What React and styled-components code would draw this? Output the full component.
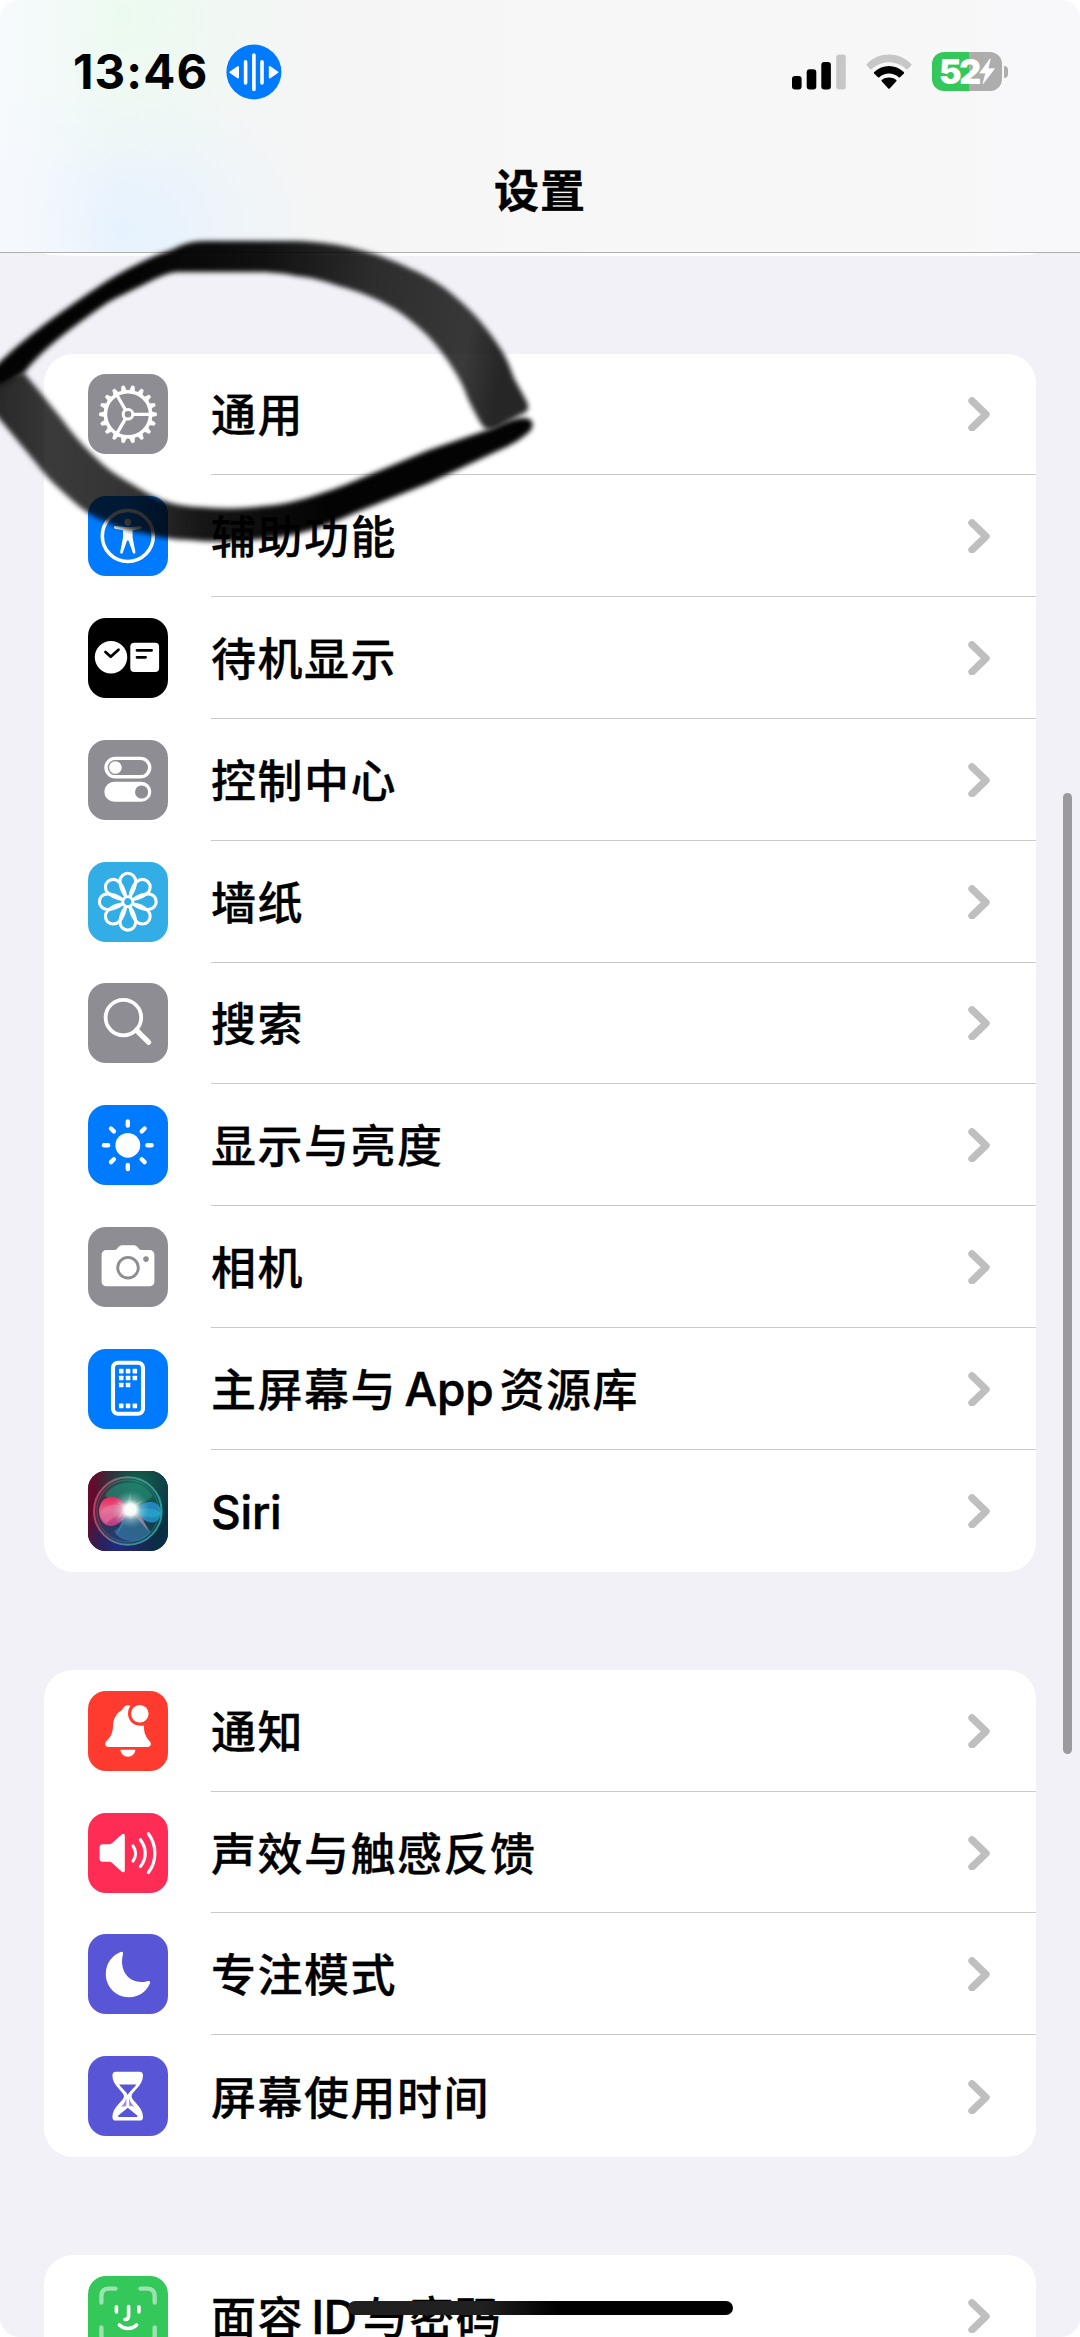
import React from "react";
import styled, { createGlobalStyle } from "styled-components";

const groups = [
  [
    { label: "通用", color: "#8e8d93", icon: "gear" },
    { label: "辅助功能", color: "#007aff", icon: "accessibility" },
    { label: "待机显示", color: "#000", icon: "standby" },
    { label: "控制中心", color: "#8e8d93", icon: "control" },
    { label: "墙纸", color: "#32ade6", icon: "wallpaper" },
    { label: "搜索", color: "#8e8d93", icon: "search" },
    { label: "显示与亮度", color: "#007aff", icon: "sun" },
    { label: "相机", color: "#8e8d93", icon: "camera" },
    { label: "主屏幕与 App资源库", color: "#007aff", icon: "home" },
    { label: "Siri", color: "#14202e", icon: "siri" },
  ],
  [
    { label: "通知", color: "#ff3b30", icon: "bell" },
    { label: "声效与触感反馈", color: "#ff2d55", icon: "speaker" },
    { label: "专注模式", color: "#5856d6", icon: "moon" },
    { label: "屏幕使用时间", color: "#5856d6", icon: "hourglass" },
  ],
  [{ label: "面容 ID与密码", color: "#34c759", icon: "face" }],
];

const around = (count) =>
  Array.from({ length: count }, (_, i) => (i * 360) / count);

const glyphs = {
  gear: (
    <g transform="translate(40 40.3)" fill="none" stroke="#fff">
      <circle r="22.6" strokeWidth="3.6" />
      {around(18).map((a) => (
        <path
          key={a}
          d="M23.5 -2.5L28.6 -1.2V1.2L23.5 2.5Z"
          fill="#fff"
          strokeWidth="0.7"
          transform={`rotate(${a})`}
        />
      ))}
      {around(3).map((a) => (
        <path key={a} d="M5 0H22" strokeWidth="3.3" transform={`rotate(${a})`} />
      ))}
      <circle r="4.8" strokeWidth="3" />
    </g>
  ),
  accessibility: (
    <g fill="#fff">
      <circle cx="39.8" cy="40" r="25.5" fill="none" stroke="#fff" strokeWidth="3.6" />
      <circle cx="39.8" cy="26.2" r="3.4" />
      <path d="M27.3 30.1L37 31.1H42.6L52.3 30.1C54 30 54.2 32.4 52.6 32.7L44.6 34.2V41.5L47.4 56C47.6 58 45.3 58.3 44.8 56.7L40.5 44.5H39.1L34.8 56.7C34.3 58.3 32 58 32.2 56L35 41.5V34.2L27 32.7C25.4 32.4 25.6 30 27.3 30.1Z" />
    </g>
  ),
  standby: (
    <g>
      <circle cx="23" cy="39.3" r="16.2" fill="#fff" />
      <rect x="42.3" y="24.7" width="28.8" height="29.4" rx="4" fill="#fff" />
      <path
        d="M17.5 34L22.7 38.8L30.5 31.8M49 32.3H63.6M49 39.3H57.6"
        fill="none"
        stroke="#000"
        strokeWidth="2.8"
        strokeLinecap="round"
        strokeLinejoin="round"
      />
    </g>
  ),
  control: (
    <g fill="#fff">
      <rect x="18" y="18.4" width="43.7" height="18.4" rx="9.2" fill="none" stroke="#fff" strokeWidth="3.4" />
      <circle cx="27.4" cy="27.5" r="6.3" />
      <rect x="16.3" y="41.7" width="47" height="20" rx="10" />
      <circle cx="53.6" cy="52" r="6.6" fill="#8e8d93" />
    </g>
  ),
  wallpaper: (
    <g transform="translate(39.8 39.7)" fill="none" stroke="#fff" strokeWidth="3.1">
      {around(8).map((a) => (
        <path
          key={a}
          d="M-2 -5C-6.4 -11 -7.8 -16 -7.8 -20.6A7.8 7.8 0 0 1 7.8 -20.6C7.8 -16 6.4 -11 2 -5"
          transform={`rotate(${a})`}
        />
      ))}
      {around(8).map((a) => (
        <path key={a} d="M0 -5V-8.5" strokeWidth="2" transform={`rotate(${a + 22.5})`} />
      ))}
      <circle r="5" strokeWidth="2.8" />
    </g>
  ),
  search: (
    <g fill="none" stroke="#fff">
      <circle cx="35.4" cy="34.6" r="17.8" strokeWidth="3.8" />
      <path d="M48.4 47.2L60.7 59.3" strokeWidth="5.2" strokeLinecap="round" />
    </g>
  ),
  sun: (
    <g transform="translate(39.8 40.3)" fill="#fff">
      <circle r="12.4" />
      {around(8).map((a) => (
        <path
          key={a}
          d="M0 -19.7V-23.8"
          stroke="#fff"
          strokeWidth="4.4"
          strokeLinecap="round"
          transform={`rotate(${a})`}
        />
      ))}
    </g>
  ),
  camera: (
    <g fill="#fff">
      <path d="M18.5 23H26.5C30 23 30 18.3 34 18.3H46C50 18.3 50 23 53.5 23H61.5C64.5 23 66.4 25 66.4 28V54.5C66.4 57.5 64.5 59.3 61.5 59.3H18.5C15.5 59.3 13.6 57.5 13.6 54.5V28C13.6 25 15.5 23 18.5 23Z" />
      <circle cx="40" cy="40.7" r="10.3" fill="none" stroke="#8e8d93" strokeWidth="2.9" />
      <circle cx="58" cy="32.1" r="2.8" fill="#8e8d93" />
    </g>
  ),
  home: (
    <g fill="#fff">
      <rect x="25" y="13.8" width="30" height="51" rx="5" fill="none" stroke="#fff" strokeWidth="4.1" />
      {[
        [0, 0], [1, 0], [2, 0],
        [0, 1], [1, 1], [2, 1],
        [0, 2], [1, 2],
        [0, 5], [1, 5], [2, 5],
      ].map(([x, y]) => (
        <rect key={`${x}${y}`} x={31 + x * 6.8} y={19.8 + y * 6.95} width="4.5" height="4.6" rx="0.6" />
      ))}
    </g>
  ),
  siri: (
    <g>
      <defs>
        <linearGradient id="siriBack" x1="0" y1="0.3" x2="1" y2="0.5">
          <stop offset="0" stopColor="#6b0a2c" />
          <stop offset="0.5" stopColor="#1d1c35" />
          <stop offset="1" stopColor="#073044" />
        </linearGradient>
        <radialGradient id="siriTop" cx="0.62" cy="0.15" r="0.55">
          <stop offset="0" stopColor="#12654f" />
          <stop offset="1" stopColor="#12654f" stopOpacity="0" />
        </radialGradient>
        <radialGradient id="siriLow" cx="0.38" cy="0.95" r="0.5">
          <stop offset="0" stopColor="#222a80" />
          <stop offset="1" stopColor="#222a80" stopOpacity="0" />
        </radialGradient>
        <linearGradient id="siriRing" x1="0" y1="0.4" x2="1" y2="0.6">
          <stop offset="0" stopColor="#d8486e" />
          <stop offset="0.45" stopColor="#5a9f96" />
          <stop offset="1" stopColor="#24b5b0" />
        </linearGradient>
        <radialGradient id="siriGlow">
          <stop offset="0" stopColor="#fff" />
          <stop offset="0.3" stopColor="#fff" stopOpacity="0.95" />
          <stop offset="0.55" stopColor="#d5ece8" stopOpacity="0.4" />
          <stop offset="1" stopColor="#8bd" stopOpacity="0" />
        </radialGradient>
        <linearGradient id="siriPink" x1="0" y1="0" x2="0" y2="1">
          <stop offset="0" stopColor="#ef2358" />
          <stop offset="0.45" stopColor="#dc628d" />
          <stop offset="1" stopColor="#b63a83" />
        </linearGradient>
      </defs>
      <rect width="80" height="80" fill="url(#siriBack)" />
      <rect width="80" height="80" fill="url(#siriTop)" />
      <rect width="80" height="80" fill="url(#siriLow)" />
      <circle cx="39.8" cy="40" r="33" fill="#2c8a7a" fillOpacity="0.22" />
      <path d="M17 25C25 9 53 5 65 25C58 31 48 37 42 38C34 34 25 29 17 25Z" fill="#279278" fillOpacity="0.55" />
      <path d="M26 60C34 55 38 48 42 41C52 45 60 56 63 61C53 74 33 73 26 60Z" fill="#3b8fbb" fillOpacity="0.5" />
      <path d="M11 40C12 25 25 22 34 30C38 33 41 37 45 40C37 44 34 54 23 55C15 55 11 48 11 40Z" fill="url(#siriPink)" />
      <path d="M12 42C19 31 32 31 45 40C34 42 25 45 18 53C14 50 12 46 12 42Z" fill="#ff8eae" fillOpacity="0.35" />
      <path d="M44 40C50 36 55 30 64 31C72 32 75 40 72 46C68 54 60 52 55 48C51 44 49 42 44 40Z" fill="#2391d0" fillOpacity="0.85" />
      <path d="M44 40C55 36 68 36 73 43C67 48 57 48 44 40Z" fill="#31c4cc" fillOpacity="0.4" />
      <path d="M45 42L61 61L54 46Z" fill="#e39bb5" fillOpacity="0.5" />
      <path d="M42 41L28 66L36 43Z" fill="#56a8e0" fillOpacity="0.35" />
      <circle cx="42.5" cy="38.5" r="19" fill="url(#siriGlow)" />
      <path d="M42 22L44 34L55 29L47 39L54 46L43 43L29 47L36 38L29 31L39 34Z" fill="#fff" fillOpacity="0.2" />
      <circle cx="39.8" cy="40" r="33.8" fill="none" stroke="url(#siriRing)" strokeWidth="2" strokeOpacity="0.8" />
      <circle cx="39.8" cy="40" r="31" fill="none" stroke="url(#siriRing)" strokeWidth="1" strokeOpacity="0.4" />
    </g>
  ),
  bell: (
    <g fill="#fff">
      <path d="M42.5 14.8C39.5 13.4 35.5 14.6 34 19C27.5 22.5 25.3 28.5 25 35C24.6 44.5 21.5 46.5 18.3 50.3C16 53 17.3 55.9 20.2 55.9H59.8C62.7 55.9 64 53 61.7 50.3C58.5 46.5 56 43.5 55.8 34.5C48 36.3 40 31 40 22.5C40 19.5 41 16.8 42.5 14.8Z" />
      <circle cx="51.8" cy="22.7" r="8.8" />
      <path d="M32.4 58.8H47.4C47 62.8 44 65.8 39.9 65.8C35.8 65.8 32.8 62.8 32.4 58.8Z" />
    </g>
  ),
  speaker: (
    <g>
      <path d="M14.5 31.3H21.5C22.5 31.3 23.2 31 24 30.3L33.6 21.5C35.3 20 36.8 20.8 36.8 22.8V57.2C36.8 59.2 35.3 60 33.6 58.5L24 49.7C23.2 49 22.5 48.7 21.5 48.7H14.5C12.6 48.7 11.6 47.7 11.6 45.8V34.2C11.6 32.3 12.6 31.3 14.5 31.3Z" fill="#fff" />
      <path
        d="M45 33C48.3 37.5 48.3 43.5 45 48M52.4 26.7C58.8 35 58.8 45.5 52.4 53.6M60.4 20.7C69 32 69 48.5 60.4 59.5"
        fill="none"
        stroke="#fff"
        strokeWidth="3.2"
        strokeLinecap="round"
      />
    </g>
  ),
  moon: (
    <path
      d="M32.7 17.9C34.5 17.2 35.5 18.4 35 20.3C31.3 34 38.5 48.4 54 48C56.5 48 58.6 47.5 60 47C61.7 46.6 62.6 47.6 62 49.2C58.5 57.8 50.5 63.2 41 63.2C28 63.2 17.8 53 17.8 40C17.8 29.5 24 21.2 32.7 17.9Z"
      fill="#fff"
    />
  ),
  hourglass: (
    <g>
      <path
        d="M28 15.7H51.6C54 15.7 55 17.2 55 19.5C55 30 43.5 35.5 43.5 40.3C43.5 45 55 50.5 55 61C55 63.5 54 64.6 51.6 64.6H28C25.5 64.6 24.4 63.5 24.4 61C24.4 50.5 36 45 36 40.3C36 35.5 24.4 30 24.4 19.5C24.4 17.2 25.5 15.7 28 15.7Z"
        fill="#fff"
      />
      <path d="M31.2 28.6H48.3C46 32.5 41 35.5 39.8 39.2C38.6 35.5 33.5 32.5 31.2 28.6Z" fill="#5856d6" />
      <path d="M38.4 41.5C38.2 44.5 36 47.5 33.2 50.8C35.5 50 37.8 51 38.4 49.2ZM41.1 41.5C41.3 44.5 43.5 47.5 46.4 50.8C44 50 41.7 51 41.1 49.2Z" fill="#5856d6" fillOpacity="0.65" />
      <path d="M39.8 51.8L49.3 59.6Q50 60.9 48.8 61H30.8Q29.6 60.9 30.3 59.6Z" fill="#5856d6" />
    </g>
  ),
  face: (
    <g fill="none" stroke="#fff" strokeWidth="3.6" strokeLinecap="round">
      <path
        d="M13.4 26.5V20C13.4 15 16 12.6 21 12.6H27.5M66.7 26.5V20C66.7 15 64 12.6 59 12.6H52.5M13.4 51.5V59C13.4 64 16 66.5 21 66.5H27.5M66.7 51.5V59C66.7 64 64 66.5 59 66.5H52.5"
        strokeWidth="4.4"
        strokeOpacity="0.5"
      />
      <path d="M28.4 30.7V36M50.9 30.7V36M40.6 30.5V40C40.6 42.5 39.5 43.5 37 43.5M31.4 49C36 53.6 44 53.6 48.6 49" />
    </g>
  ),
};

const SignalIcon = () => (
  <svg width="54" height="36" viewBox="0 0 54 36">
    <rect x="0" y="22" width="9.6" height="13.5" rx="3" />
    <rect x="14.7" y="15.2" width="9.6" height="20.3" rx="3" />
    <rect x="29.3" y="8" width="9.6" height="27.5" rx="3" />
    <rect x="44.2" y="0.4" width="9.6" height="35.1" rx="3" fill="#c7c7c7" />
  </svg>
);

const WifiIcon = () => (
  <svg width="46" height="36" viewBox="0 0 46 36">
    <path d="M0.6 11.3Q0 10.6 0.8 9.9C13 -2.6 33 -2.6 45.2 9.9Q46 10.6 45.4 11.3L41.6 15.2Q41 15.8 40.2 15.1C30.5 5.8 15.5 5.8 5.8 15.1Q5 15.8 4.4 15.2Z" fill="#c7c7c7" />
    <path d="M8.1 19.4Q7.5 18.7 8.2 18C16.5 9.9 29.5 9.9 37.8 18Q38.5 18.7 37.9 19.4L34 23.3Q33.3 23.9 32.6 23.3C27.2 18.3 18.8 18.3 13.4 23.3Q12.7 23.9 12 23.3Z" />
    <path d="M15.7 27.3Q15 26.6 15.8 26C20 22.8 26 22.8 30.2 26Q31 26.6 30.3 27.3L23.7 34.5Q23 35.2 22.3 34.5Z" />
  </svg>
);

const VoiceIcon = () => (
  <svg width="56" height="56" viewBox="0 0 56 56">
    <ellipse cx="27.9" cy="28" rx="27.5" ry="27.4" fill="#007aff" />
    <path d="M19.6 17.7V38.9M27.9 11V45.4M36 17.7V38.9" stroke="#fff" strokeWidth="3.6" strokeLinecap="round" />
    <path d="M4.5 28.2L12 23V33.5ZM51.3 28.2L43.8 23V33.5Z" fill="#fff" stroke="#fff" strokeWidth="2" strokeLinejoin="round" />
  </svg>
);

const Bolt = () => (
  <svg width="16" height="27" viewBox="0 0 16 27">
    <path d="M11.2 0.8L0.8 15H6.8L4 25.6L15.4 10.8H9Z" fill="#fff" stroke="#fff" strokeWidth="0.8" strokeLinejoin="round" />
  </svg>
);

const ChevronIcon = () => (
  <svg width="22" height="35" viewBox="0 0 22 35">
    <path d="M4 4.8L18 18.3L4 31.8" fill="none" stroke="#bfbfbf" strokeWidth="7.4" strokeLinecap="round" strokeLinejoin="round" />
  </svg>
);

// marker loop drawn around the first row
const MarkerLoop = () => (
  <Ink width="560" height="340" viewBox="0 220 560 340">
    <defs>
      <linearGradient id="inkTop" gradientUnits="userSpaceOnUse" x1="120" y1="300" x2="500" y2="370">
        <stop offset="0" stopOpacity="0.99" />
        <stop offset="0.35" stopOpacity="0.93" />
        <stop offset="0.65" stopOpacity="0.81" />
        <stop offset="0.9" stopOpacity="0.77" />
        <stop offset="1" stopOpacity="0.85" />
      </linearGradient>
      <linearGradient id="inkLow" gradientUnits="userSpaceOnUse" x1="0" y1="0" x2="330" y2="0">
        <stop offset="0" stopOpacity="0.83" />
        <stop offset="0.15" stopOpacity="0.77" />
        <stop offset="0.4" stopOpacity="0.8" />
        <stop offset="0.6" stopOpacity="0.91" />
        <stop offset="1" stopOpacity="0.99" />
      </linearGradient>
      <filter id="soft" x="-5%" y="-5%" width="110%" height="110%">
        <feGaussianBlur stdDeviation="2.4" />
      </filter>
    </defs>
    <path
      filter="url(#soft)"
      fill="url(#inkTop)"
      d="M-12 374C20 340 60 312 107 281C130 267 150 257 171 250C183 244 192 241 206 241H298C335 242 375 251 411 269C430 277 445 287 459 300C475 314 488 329 500 348C508 360 510 368 514 378L527 402C530 410 527 412 520 415L498 427C490 431 485 430 482 425C476 415 473 409 468 399C465 390 462 384 458 377C450 363 441 350 429 337C418 326 406 316 393 308C376 298 358 291 339 286C325 281 310 277 296 276C285 273 276 273 264 272H178C165 273 155 279 143 285C131 291 119 296 107 303C88 316 70 329 52 344C43 352 33 361 24 373L-12 395Z"
    />
    <path
      filter="url(#soft)"
      fill="url(#inkLow)"
      d="M-12 392C0 386 8 376 24 373C36 387 48 402 61 418C72 433 83 446 96 458C107 469 119 477 132 484C145 492 157 499 171 503C185 507 200 507 214 508C232 509 248 508 264 506C279 505 293 502 307 498C325 492 341 487 357 480L429 450L493 428C505 422 515 418 524 418C535 418 534 428 529 432C521 439 513 444 504 448L429 483L357 512C340 520 322 527 304 532C287 537 268 539 250 540C229 542 209 542 189 540C173 540 158 537 143 533C130 531 116 527 104 521C88 515 76 504 64 493C54 484 45 475 36 463L-12 405Z"
    />
  </Ink>
);

// latin words sit tighter than the Chinese text around them
const mixed = (text) =>
  text
    .split(/([A-Za-z]+)/)
    .filter(Boolean)
    .map((part) =>
      /[A-Za-z]/.test(part) ? <Latin key={part}>{part}</Latin> : part
    );

const SettingsRow = ({ item, last }) => (
  <Row>
    <Tile $color={item.color}>
      <svg width="80" height="80" viewBox="0 0 80 80">
        {glyphs[item.icon]}
      </svg>
    </Tile>
    <RowBody $last={last}>
      <Label>{mixed(item.label)}</Label>
      <ChevronIcon />
    </RowBody>
  </Row>
);

const App = () => {
  return (
    <Screen>
      <GlobalStyle />
      <Header>
        <StatusBar>
          <StatusSide>
            <Time>13:46</Time>
            <VoiceIcon />
          </StatusSide>
          <StatusIcons>
            <SignalIcon />
            <WifiIcon />
            <BatteryWrap>
              <Battery>
                <Percent>52</Percent>
                <Bolt />
              </Battery>
              <BatteryTip />
            </BatteryWrap>
          </StatusIcons>
        </StatusBar>
        <Title>设置</Title>
      </Header>
      <PreviousCard />
      <List>
        {groups.map((items, i) => (
          <Card key={i}>
            {items.map((item, j) => (
              <SettingsRow key={item.label} item={item} last={j === items.length - 1 && i < 2} />
            ))}
          </Card>
        ))}
      </List>
      <MarkerLoop />
      <ScrollThumb />
      <HomeBar />
    </Screen>
  );
};

export default App;

const GlobalStyle = createGlobalStyle`
  body {
    margin: 0;
    background: #fff;
    overflow: hidden;
  }
  svg {
    display: block;
    flex: none;
  }
`;

const Screen = styled.div`
  position: relative;
  display: flex;
  flex-direction: column;
  width: 1080px;
  height: 2337px;
  overflow: hidden;
  border-radius: 20px;
  background: #f2f1f7;
  color: #000;
  font-family: "Inter", "Noto Sans CJK SC", sans-serif;
`;

const Header = styled.header`
  flex: none;
  box-sizing: border-box;
  height: 253px;
  border-bottom: 1px solid #b0b0b3;
  background:
    linear-gradient(90deg, rgba(247, 250, 254, 0.85), rgba(247, 250, 254, 0) 120px),
    radial-gradient(ellipse 190px 170px at 120px 15px, #ecfbf0, rgba(236, 251, 240, 0.5) 50%, rgba(236, 251, 240, 0)),
    radial-gradient(ellipse 200px 160px at 120px 230px, #e6f2fe, rgba(230, 242, 254, 0.5) 50%, rgba(230, 242, 254, 0)),
    linear-gradient(90deg, #f2f8f8, #f4f6f6 200px, #f5f5f5 320px, #f7f7f7 600px, #f7f7f7 900px, #f8f8fb);
`;

const StatusBar = styled.div`
  display: flex;
  justify-content: space-between;
  align-items: center;
  height: 144px;
  padding: 0 72px 0 73px;
`;

const StatusSide = styled.div`
  display: flex;
  align-items: center;
  gap: 19px;
`;

const Time = styled.div`
  width: 134px;
  font-size: 47.5px;
  font-weight: 750;
  line-height: 56px;
  letter-spacing: 1.1px;
  white-space: nowrap;
`;

const StatusIcons = styled.div`
  display: flex;
  align-items: center;
  gap: 20px;
  margin-top: -1px;
`;

const BatteryWrap = styled.div`
  display: flex;
  align-items: center;
  gap: 2px;
`;

const Battery = styled.div`
  display: flex;
  align-items: center;
  justify-content: center;
  box-sizing: border-box;
  width: 70px;
  height: 39px;
  border-radius: 12px;
  background: linear-gradient(90deg, #34c759 37px, #adadad 37px);
`;

const Percent = styled.span`
  color: #fff;
  font-size: 34px;
  font-weight: 900;
  line-height: 39px;
  letter-spacing: -2.4px;
`;

const BatteryTip = styled.div`
  width: 4px;
  height: 12px;
  border-radius: 0 5px 5px 0;
  background: #adadad;
`;

const Title = styled.h1`
  margin: 0;
  padding-top: 15px;
  font-size: 45px;
  font-weight: 700;
  line-height: 66px;
  letter-spacing: 1px;
  text-align: center;
  -webkit-text-stroke: 0.4px #000;
`;

const PreviousCard = styled.div`
  flex: none;
  height: 3px;
  margin: 0 44px;
  border-radius: 0 0 36px 36px / 0 0 3px 3px;
  background: #fdfdfe;
`;

const List = styled.main`
  display: flex;
  flex-direction: column;
  gap: 98.3px;
  padding: 97.6px 44px 0;
`;

const Card = styled.section`
  flex: none;
  border-radius: 29px;
  background: #fff;
  overflow: hidden;
`;

const Row = styled.div`
  display: flex;
  align-items: center;
  gap: 43px;
  height: 121.8px;
  padding-left: 44px;
`;

const Tile = styled.div`
  flex: none;
  width: 80px;
  height: 80px;
  border-radius: 18px;
  background: ${(props) => props.$color};
  overflow: hidden;
`;

const RowBody = styled.div`
  display: flex;
  flex: 1;
  align-items: center;
  justify-content: space-between;
  box-sizing: border-box;
  height: 100%;
  padding-right: 46px;
  border-bottom: ${(props) => (props.$last ? "none" : "1px solid #cbcbcd")};
`;

const Label = styled.span`
  padding-top: 5px;
  font-size: 45px;
  font-weight: 500;
  line-height: 66px;
  letter-spacing: 1.5px;
  word-spacing: -6px;
  white-space: nowrap;
  -webkit-text-stroke: 0.3px #000;
`;

const Latin = styled.span`
  position: relative;
  top: -1px;
  margin-right: 6px;
  font-size: 46px;
  letter-spacing: -0.2px;
  -webkit-text-stroke: 0.6px #000;
`;

const Ink = styled.svg`
  position: absolute;
  top: 220px;
  left: 0;
  pointer-events: none;
`;

const ScrollThumb = styled.div`
  position: absolute;
  top: 793px;
  right: 8px;
  width: 9px;
  height: 961px;
  border-radius: 5px;
  background: #9b9a9f;
`;

const HomeBar = styled.div`
  position: absolute;
  top: 2301px;
  left: 348px;
  width: 385px;
  height: 14px;
  border-radius: 7px;
  background: linear-gradient(90deg, #202020 35%, #000 55%);
`;
